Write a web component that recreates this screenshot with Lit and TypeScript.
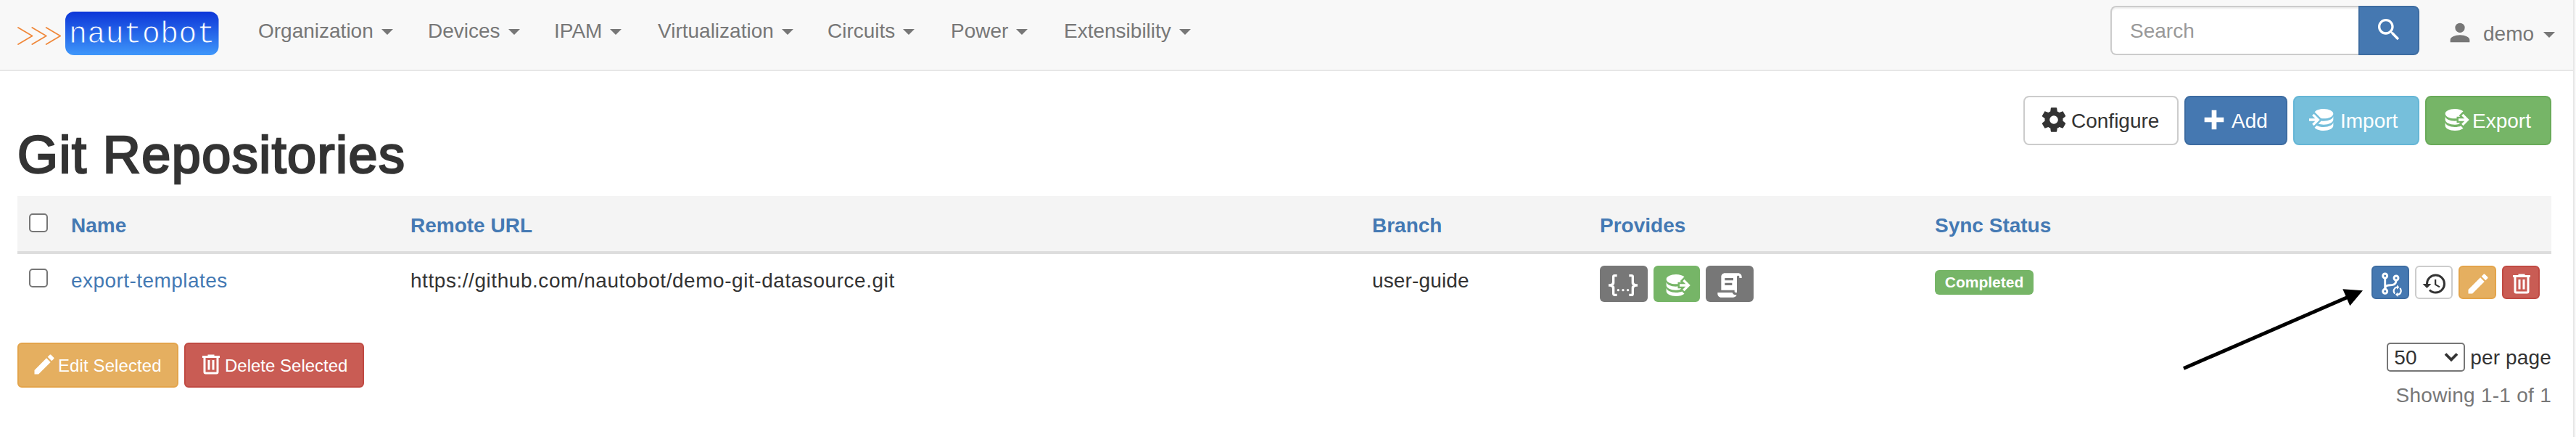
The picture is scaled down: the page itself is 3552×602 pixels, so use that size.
import { LitElement, html, css, svg } from "lit";
import { customElement, property } from "lit/decorators.js";

const ICONS: Record<string, string> = {
  cog: "M12,15.5A3.5,3.5 0 0,1 8.5,12A3.5,3.5 0 0,1 12,8.5A3.5,3.5 0 0,1 15.5,12A3.5,3.5 0 0,1 12,15.5M19.43,12.97C19.47,12.65 19.5,12.33 19.5,12C19.5,11.67 19.47,11.34 19.43,11L21.54,9.37C21.73,9.22 21.78,8.95 21.66,8.73L19.66,5.27C19.54,5.05 19.27,4.96 19.05,5.05L16.56,6.05C16.04,5.66 15.5,5.32 14.87,5.07L14.5,2.42C14.46,2.18 14.25,2 14,2H10C9.75,2 9.54,2.18 9.5,2.42L9.13,5.07C8.5,5.32 7.96,5.66 7.44,6.05L4.95,5.05C4.73,4.96 4.46,5.05 4.34,5.27L2.34,8.73C2.21,8.95 2.27,9.22 2.46,9.37L4.57,11C4.53,11.34 4.5,11.67 4.5,12C4.5,12.33 4.53,12.65 4.57,12.97L2.46,14.63C2.27,14.78 2.21,15.05 2.34,15.27L4.34,18.73C4.46,18.95 4.73,19.03 4.95,18.95L7.44,17.94C7.96,18.34 8.5,18.68 9.13,18.93L9.5,21.58C9.54,21.82 9.75,22 10,22H14C14.25,22 14.46,21.82 14.5,21.58L14.87,18.93C15.5,18.67 16.04,18.34 16.56,17.94L19.05,18.95C19.27,19.03 19.54,18.95 19.66,18.73L21.66,15.27C21.78,15.05 21.73,14.78 21.54,14.63L19.43,12.97Z",
  plus: "M20 14H14V20H10V14H4V10H10V4H14V10H20V14Z",
  magnify: "M9.5,3A6.5,6.5 0 0,1 16,9.5C16,11.11 15.41,12.59 14.44,13.73L14.71,14H15.5L20.5,19L19,20.5L14,15.5V14.71L13.73,14.44C12.59,15.41 11.11,16 9.5,16A6.5,6.5 0 0,1 3,9.5A6.5,6.5 0 0,1 9.5,3M9.5,5C7,5 5,7 5,9.5C5,12 7,14 9.5,14C12,14 14,12 14,9.5C14,7 12,5 9.5,5Z",
  account: "M12,4A4,4 0 0,1 16,8A4,4 0 0,1 12,12A4,4 0 0,1 8,8A4,4 0 0,1 12,4M12,14C16.42,14 20,15.79 20,18V20H4V18C4,15.79 7.58,14 12,14Z",
  pencil: "M20.71,7.04C21.1,6.65 21.1,6 20.71,5.63L18.37,3.29C18,2.9 17.35,2.9 16.96,3.29L15.12,5.12L18.87,8.87M3,17.25V21H6.75L17.81,9.93L14.06,6.18L3,17.25Z",
  trash: "M9,3V4H4V6H5V19A2,2 0 0,0 7,21H17A2,2 0 0,0 19,19V6H20V4H15V3H9M7,6H17V19H7V6M9,8V17H11V8H9M13,8V17H15V8H13Z",
  history: "M13.5,8H12V13L16.28,15.54L17,14.33L13.5,12.25V8M13,3A9,9 0 0,0 4,12H1L4.96,16.03L9,12H6A7,7 0 0,1 13,5A7,7 0 0,1 20,12A7,7 0 0,1 13,19C11.07,19 9.32,18.21 8.06,16.94L6.64,18.36C8.27,20 10.5,21 13,21A9,9 0 0,0 22,12A9,9 0 0,0 13,3",
  dbExport: "M12,3C7.58,3 4,4.79 4,7C4,9.21 7.58,11 12,11C12.5,11 13,10.97 13.5,10.92V9.5H16.39L15.39,8.5L18.9,5C17.5,3.8 14.94,3 12,3M18.92,7.08L17.5,8.5L20,11H15V13H20L17.5,15.5L18.92,16.92L23.84,12M4,9V12C4,14.21 7.58,16 12,16C13.17,16 14.26,15.85 15.25,15.63L16.38,14.5H13.5V12.92C13,12.97 12.5,13 12,13C7.58,13 4,11.21 4,9M4,14V17C4,19.21 7.58,21 12,21C14.94,21 17.5,20.2 18.9,19L17,17.1C15.61,17.66 13.9,18 12,18C7.58,18 4,16.21 4,14Z",
  dbImport: "M12,3C8.59,3 5.69,4.07 4.54,5.57L9.79,10.82C10.5,10.93 11.22,11 12,11C16.42,11 20,9.21 20,7C20,4.79 16.42,3 12,3M3.92,7.08L2.5,8.5L5,11H0V13H5L2.5,15.5L3.92,16.92L8.84,12M20,9C20,11.21 16.42,13 12,13C11.34,13 10.7,12.95 10.09,12.87L7.62,15.34C8.88,15.75 10.38,16 12,16C16.42,16 20,14.21 20,12M20,14C20,16.21 16.42,18 12,18C9.72,18 7.67,17.5 6.21,16.75L4.53,18.43C5.68,19.93 8.59,21 12,21C16.42,21 20,19.21 20,17",
  script: "M17.8,20C17.4,21.2 16.3,22 15,22H5C3.3,22 2,20.7 2,19V18H5L14.2,18C14.6,19.2 15.7,20 17,20H17.8M19,2C20.7,2 22,3.3 22,5V6H20V5C20,4.4 19.6,4 19,4C18.4,4 18,4.4 18,5V18H17C16.4,18 16,17.6 16,17V16H5V5C5,3.3 6.3,2 8,2H19M8,6V8H15V6H8M8,10V12H14V10H8Z",
  json: "M5,3H7V5H5V10A2,2 0 0,1 3,12A2,2 0 0,1 5,14V19H7V21H5C3.93,20.73 3,20.1 3,19V15A2,2 0 0,0 1,13H0V11H1A2,2 0 0,0 3,9V5A2,2 0 0,1 5,3M19,3A2,2 0 0,1 21,5V9A2,2 0 0,0 23,11H24V13H23A2,2 0 0,0 21,15V19A2,2 0 0,1 19,21H17V19H19V14A2,2 0 0,1 21,12A2,2 0 0,1 19,10V5H17V3H19M12,15A1,1 0 0,1 13,16A1,1 0 0,1 12,17A1,1 0 0,1 11,16A1,1 0 0,1 12,15M8,15A1,1 0 0,1 9,16A1,1 0 0,1 8,17A1,1 0 0,1 7,16A1,1 0 0,1 8,15M16,15A1,1 0 0,1 17,16A1,1 0 0,1 16,17A1,1 0 0,1 15,16A1,1 0 0,1 16,15Z",
};

@customElement("app-icon")
class AppIcon extends LitElement {
  @property() name = "";
  @property({ type: Number }) size = 40;
  static styles = css`
    :host { display: inline-flex; flex: none; }
    svg { display: block; fill: currentColor; }
  `;
  render() {
    return html`<svg width=${this.size} height=${this.size} viewBox="0 0 24 24">
      <path d=${ICONS[this.name] ?? ""}></path>
    </svg>`;
  }
}

const branchSync = svg`
  <g fill="none" stroke="currentColor" stroke-width="2.9">
    <circle cx="10.7" cy="8" r="3"/><circle cx="10.7" cy="29.3" r="3"/><circle cx="26" cy="11" r="3"/>
    <path d="M10.7 11V26.3M26 14C26 18.6 24 20.2 20 20.6L15.6 21C13 21.2 11.2 22 10.7 25"/>
    <path stroke-width="2.2" d="M24.2 32.400A5.2 5.2 0 0 1 27.200 23.600M31.200 25A5.2 5.2 0 0 1 28.200 33.800"/>
  </g>
  <path fill="currentColor" d="M27 20.400V26.800L30.400 23.600ZM28.400 37V30.600L25 33.800Z"/>`;

@customElement("app-root")
class AppRoot extends LitElement {
  static styles = css`
    * { box-sizing: border-box; }
    :host {
      display: flex; width: 3552px; height: 602px; position: relative; overflow: hidden;
      background: #fff; color: #333;
      font: 28px/40px "Liberation Sans", Arial, sans-serif;
    }
    .page { width: 3548px; flex: none; }
    .edge { width: 4px; border-left: 2px solid #e7e7e7; background: #fafafa; }
    .nav {
      height: 98px; background: #f8f8f8; border-bottom: 2px solid #e7e7e7; color: #777;
      display: flex; align-items: flex-start; padding-left: 22px;
    }
    .logo { margin-top: 16px; width: 282px; height: 60px; display: block; flex: none; }
    .logo text { font: 42px "Liberation Mono", monospace; }
    .menu {
      display: grid; grid-template-columns: 234px 174px 143px 234px 170px 156px 177px;
      margin-left: 52px; padding-top: 23px;
    }
    .item { display: flex; align-items: center; gap: 11px; white-space: nowrap; }
    .caret { width: 0; height: 0; border: 8px solid transparent; border-top-color: currentColor; border-bottom: 0; }
    .item .caret { margin-top: 2px; }
    .search { display: flex; margin: 8px 0 0 auto; }
    .field {
      width: 342px; height: 68px; background: #fff; border: 2px solid #ccc; border-right: 0;
      border-radius: 8px 0 0 8px; color: #999; padding: 13px 0 0 25px;
      box-shadow: inset 0 2px 2px rgba(0,0,0,.075);
    }
    .go {
      width: 84px; height: 68px; background: #4578b1; border: 2px solid #3d6ca1; color: #fff;
      border-radius: 0 8px 8px 0; padding: 11px 0 0 20px;
    }
    .user { display: flex; margin: 25px 24px 0 36px; width: 152px; }
    .user span { margin: 2px 13px 0 12px; }
    .user .caret { margin-top: 19px; }
    .top { display: flex; justify-content: space-between; padding: 34px 30px 0 24px; height: 172px; }
    h1 {
      margin: 41px 0 0; font-size: 72px; line-height: 80px; font-weight: 400; letter-spacing: 1.45px;
      -webkit-text-stroke: 2.6px #333; height: 80px; white-space: nowrap;
    }
    .buttons { display: flex; gap: 8px; }
    .btn {
      display: flex; align-items: center; border: 2px solid #ccc; border-radius: 8px; height: 68px;
      white-space: nowrap; color: #fff; flex: none;
    }
    .btn app-icon { margin-top: -2px; }
    .btn span { padding-top: 1px; }
    .default { background: #fff; color: #333; border-color: #ccc; }
    .primary { background: #4578b1; border-color: #3d6ca1; }
    .info { background: #76bfdb; border-color: #65b6d6; }
    .success { background: #76b567; border-color: #69aa59; }
    .warning { background: #e5af60; border-color: #e3a44b; }
    .danger { background: #c95c54; border-color: #c04a43; }
    .configure { width: 214px; padding-left: 20px; gap: 4px; }
    .add { width: 142px; padding-left: 19px; gap: 4px; }
    .import { width: 174px; padding-left: 20px; gap: 3px; }
    .export { width: 174px; padding-left: 19px; gap: 4px; }
    .row { display: grid; grid-template-columns: 73px 468px 1326px 315px 462px 850px; width: 3494px; margin-left: 24px; }
    .head { height: 80px; background: #f4f4f4; border-bottom: 4px solid #ddd; color: #4479b3; font-weight: 700; padding-top: 20px; }
    .body { height: 122px; padding-top: 16px; }
    .cell { padding: 1px 0 0 1px; white-space: nowrap; }
    .head .cell:nth-child(n + 5) { padding-left: 0; }
    .body .label { color: #333; letter-spacing: .55px; }
    .body .label.link { color: #4479b3; letter-spacing: .45px; }
    .body .label.branch { letter-spacing: .15px; }
    .check { width: 26px; height: 26px; margin: 4px 0 0 16px; background: #fff; border: 2px solid #767676; border-radius: 5px; }
    .tags { display: flex; gap: 8px; }
    .tag { height: 50px; border-radius: 6px; background: #777; color: #fff; display: flex; padding: 7px 0 0 12px; width: 66px; }
    .tag.green { background: #76b567; width: 64px; padding-left: 11px; }
    .tag.doc { padding: 7px 0 0 13px; }
    .status {
      display: block; width: 136px; height: 34px; margin-top: 6px; border-radius: 6px; background: #76b567; color: #fff;
      font: 700 21px/34px "Liberation Sans", Arial, sans-serif; text-align: center;
    }
    .actions { flex: 1; display: flex; justify-content: flex-end; gap: 8px; padding-right: 16px; }
    .act { width: 52px; height: 46px; border: 2px solid; border-radius: 6px; display: flex; padding: 4.5px 0 0 6.5px; color: #fff; }
    .act.default { color: #333; border-color: #ccc; }
    .act.primary { border-color: #3d6ca1; padding: 4px 0 0 6px; }
    .act.warning { border-color: #e3a44b; }
    .act.danger { border-color: #c04a43; }
    .foot { display: flex; justify-content: space-between; padding: 0 30px 0 24px; }
    .small { height: 62px; border-radius: 6px; font-size: 24px; padding-left: 17px; gap: 1px; }
    .edit { width: 222px; letter-spacing: .1px; }
    .delete { width: 248px; }
    .pager { display: flex; flex-direction: column; align-items: flex-end; }
    .per { display: flex; align-items: center; gap: 7px; height: 40px; letter-spacing: .15px; }
    .per span { padding-top: 1px; }
    .select { width: 108px; height: 40px; border: 2px solid #767676; border-radius: 5px; display: flex; align-items: center; padding: 0 7px 0 8px; justify-content: space-between; }
    .showing { color: #777; margin-top: 13px; letter-spacing: .27px; }
    .arrow { position: absolute; left: 3000px; top: 390px; }
  `;

  menu = ["Organization", "Devices", "IPAM", "Virtualization", "Circuits", "Power", "Extensibility"];

  render() {
    return html`
      <div class="page">
        <nav class="nav">
          <svg class="logo" viewBox="0 0 282 60">
            <defs>
              <linearGradient id="g" gradientUnits="userSpaceOnUse" x1="0" y1="0" x2="0" y2="60">
                <stop offset="0" stop-color="#0d36d8"></stop><stop offset="1" stop-color="#3f97fa"></stop>
              </linearGradient>
            </defs>
            <g fill="none" stroke="#f0883a" stroke-width="1.8" stroke-linejoin="round" stroke-linecap="round">
              <path d="M3 22L22.5 33.500L3 45M22.300 22L41.800 33.500L22.300 45M41.700 22L61.200 33.500L41.700 45"></path>
            </g>
            <rect x="68" width="211.500" height="60" rx="12" fill="url(#g)"></rect>
            <text x="73" y="42.500" fill="#fff" stroke="url(#g)" stroke-width="1">nautobot</text>
          </svg>
          <div class="menu">
            ${this.menu.map((m) => html`<div class="item"><span>${m}</span><i class="caret"></i></div>`)}
          </div>
          <div class="search">
            <div class="field">Search</div>
            <div class="go"><app-icon name="magnify"></app-icon></div>
          </div>
          <div class="user"><app-icon name="account"></app-icon><span>demo</span><i class="caret"></i></div>
        </nav>
        <header class="top">
          <h1>Git Repositories</h1>
          <div class="buttons">
            <div class="btn default configure"><app-icon name="cog"></app-icon><span>Configure</span></div>
            <div class="btn primary add"><app-icon name="plus"></app-icon><span>Add</span></div>
            <div class="btn info import"><app-icon name="dbImport"></app-icon><span>Import</span></div>
            <div class="btn success export"><app-icon name="dbExport"></app-icon><span>Export</span></div>
          </div>
        </header>
        <div class="row head">
          <div class="check"></div>
          <div class="cell">Name</div><div class="cell">Remote URL</div><div class="cell">Branch</div>
          <div class="cell">Provides</div><div class="cell">Sync Status</div>
        </div>
        <div class="row body">
          <div class="check"></div>
          <div class="cell label link">export-templates</div>
          <div class="cell label">https://github.com/nautobot/demo-git-datasource.git</div>
          <div class="cell label branch">user-guide</div>
          <div class="tags">
            <div class="tag"><app-icon name="json"></app-icon></div>
            <div class="tag green"><app-icon name="dbExport"></app-icon></div>
            <div class="tag doc"><app-icon name="script"></app-icon></div>
          </div>
          <div class="tags">
            <div class="status">Completed</div>
            <div class="actions">
              <div class="act primary"><svg width="36" height="38" viewBox="0 0 36 38">${branchSync}</svg></div>
              <div class="act default"><app-icon name="history" size="36"></app-icon></div>
              <div class="act warning"><app-icon name="pencil" size="36"></app-icon></div>
              <div class="act danger"><app-icon name="trash" size="36"></app-icon></div>
            </div>
          </div>
        </div>
        <footer class="foot">
          <div class="buttons">
            <div class="btn warning small edit"><app-icon name="pencil" size="36"></app-icon><span>Edit Selected</span></div>
            <div class="btn danger small delete"><app-icon name="trash" size="36"></app-icon><span>Delete Selected</span></div>
          </div>
          <div class="pager">
            <div class="per">
              <div class="select"><span>50</span>
                <svg width="20" height="14" viewBox="0 0 20 14"><path d="M2 2.500L10 10.500L18 2.500" fill="none" stroke="#333" stroke-width="3.800"></path></svg>
              </div>
              <span>per page</span>
            </div>
            <div class="showing">Showing 1-1 of 1</div>
          </div>
        </footer>
      </div>
      <div class="edge"></div>
      <svg class="arrow" width="262" height="124" viewBox="0 0 262 124">
        <path d="M11 117.500L238 19" stroke="#000" stroke-width="5"></path>
        <path d="M230.300 8.300L258 10.200L240.300 31.300Z"></path>
      </svg>
    `;
  }
}
